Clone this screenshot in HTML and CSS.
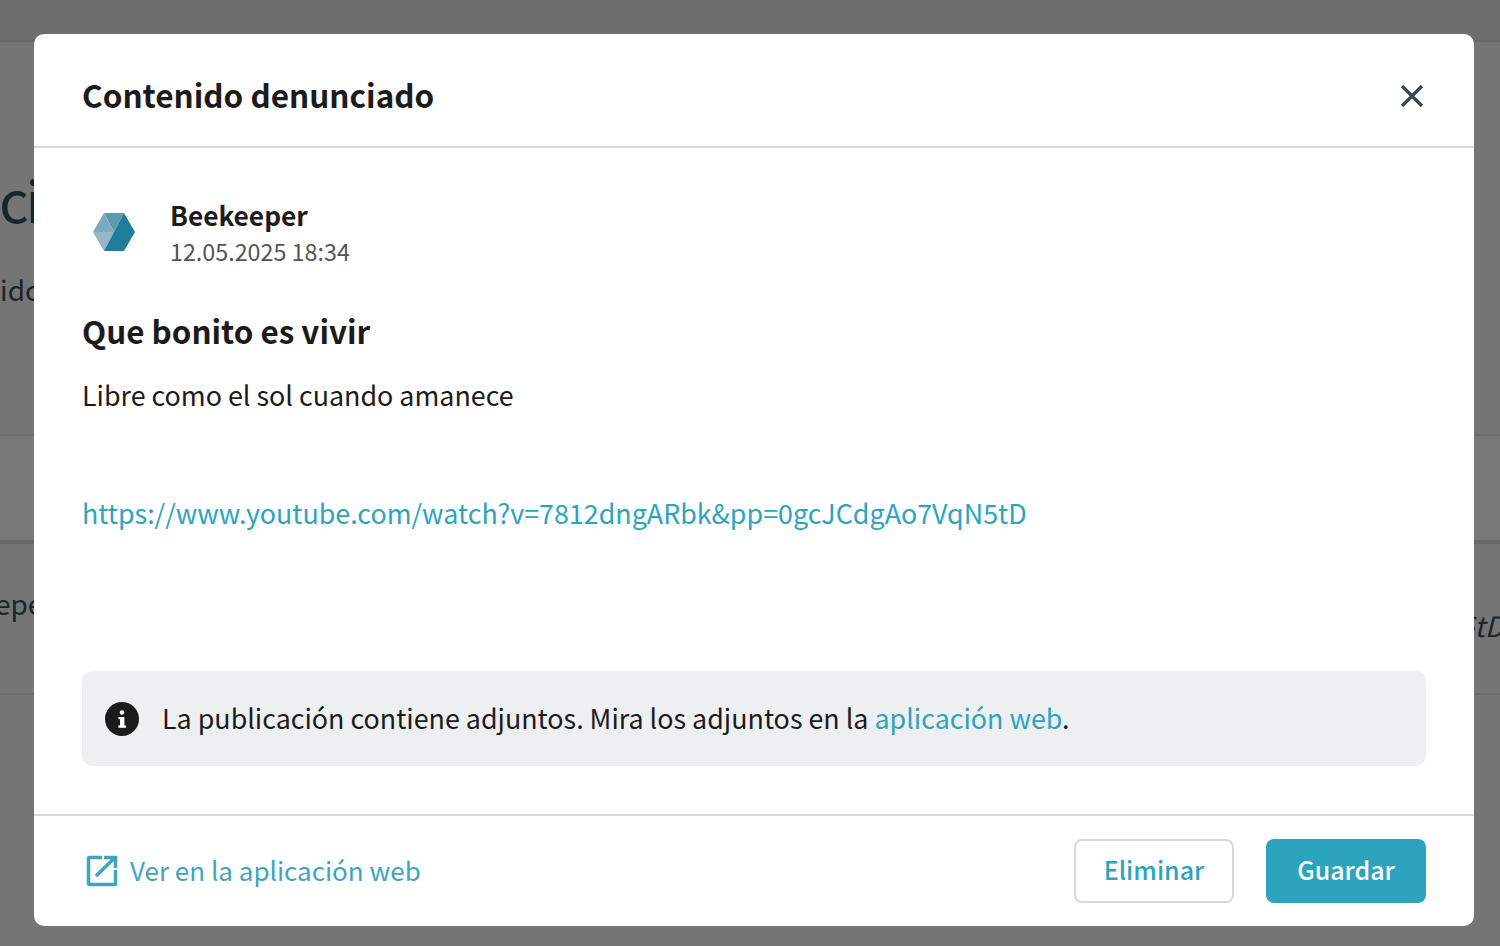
FILE: index.html
```html
<!DOCTYPE html>
<html lang="es">
<head>
<meta charset="utf-8">
<title>Contenido denunciado</title>
<link rel="stylesheet" href="styles.css">
</head>
<body>
<div class="page">
  <div class="top-bar"></div>
  <div class="bg-head">
    <div class="bg-title">ci</div>
    <div class="bg-sub">ido</div>
  </div>
  <div class="bg-tabs"></div>
  <div class="bg-row">
    <span class="bg-cell">epe</span>
    <em class="bg-cell-end">5tD</em>
  </div>
  <div class="bg-rest"></div>
</div>

<div class="modal" role="dialog">
  <header class="modal-header">
    <h1 class="modal-title">Contenido denunciado</h1>
    <svg class="close-icon" width="24" height="24" viewBox="0 0 24 24"><path d="M2 2 L22 22 M22 2 L2 22"/></svg>
  </header>
  <main class="modal-body">
    <div class="author">
      <div class="avatar">
        <svg width="44" height="40" viewBox="0 0 44 40">
          <polygon points="12,1 32,1 22,20" fill="#5f9ab0"/>
          <polygon points="1,20 12,1 22,20" fill="#7ba9bd"/>
          <polygon points="1,20 22,20 12,39" fill="#92b8c8"/>
          <polygon points="32,1 43,20 32,39 12,39" fill="#1f7d9b"/>
        </svg>
      </div>
      <div class="author-meta">
        <div class="author-name">Beekeeper</div>
        <div class="author-date">12.05.2025 18:34</div>
      </div>
    </div>
    <h2 class="post-title">Que bonito es vivir</h2>
    <p class="post-text">Libre como el sol cuando amanece</p>
    <a class="post-link" href="#">https://www.youtube.com/watch?v=7812dngARbk&amp;pp=0gcJCdgAo7VqN5tD</a>
    <div class="notice">
      <svg class="notice-icon" width="34" height="34" viewBox="0 0 34 34">
        <circle cx="17" cy="17" r="17" fill="#1b1b1b"/>
        <rect x="15" y="15" width="4.400" height="10" fill="#fff"/>
        <rect x="13.400" y="15" width="3" height="2.200" fill="#fff"/>
        <rect x="13.400" y="23.400" width="7.600" height="2.400" fill="#fff"/>
        <circle cx="17" cy="10.500" r="2.300" fill="#fff"/>
      </svg>
      <span class="notice-text">La publicación contiene adjuntos. Mira los adjuntos en la <a class="inline-link" href="#">aplicación web</a>.</span>
    </div>
  </main>
  <footer class="modal-footer">
    <a class="web-link" href="#">
      <svg width="32" height="32" viewBox="0 0 32 32" class="web-icon">
        <path d="M16 2.500 H3.500 a1 1 0 0 0 -1 1 V28.500 a1 1 0 0 0 1 1 H28.500 a1 1 0 0 0 1 -1 V15"/>
        <path d="M10 21 L28 3.500 M18 2.500 H29.500 V13"/>
      </svg>
      <span class="web-label">Ver en la aplicación web</span>
    </a>
    <div class="actions">
      <button class="btn btn-secondary">Eliminar</button>
      <button class="btn btn-primary">Guardar</button>
    </div>
  </footer>
</div>
</body>
</html>
```
FILE: styles.css
```css
* { box-sizing: border-box; }
html, body { margin: 0; height: 100%; }
body {
  overflow: hidden;
  background: #757575;
  font-family: "Noto Sans CJK SC", "Noto Sans", sans-serif;
  color: #1b1b1b;
}
.page { height: 946px; display: flex; flex-direction: column; }
.top-bar { height: 42px; background: #6e6e6e; border-bottom: 2px solid #686868; }
.bg-head { height: 394px; padding-top: 121px; color: #1a2529; border-bottom: 2px solid #6c6c6c; }
.bg-title { font-size: 58px; line-height: 70px; letter-spacing: -3px; margin-left: -1px; }
.bg-sub { font-size: 28px; line-height: 40px; margin-top: 36px; }
.bg-tabs { height: 108px; background: #787878; border-bottom: 4px solid #686868; }
.bg-row {
  height: 151px;
  display: flex;
  justify-content: space-between;
  padding-top: 41px;
  font-size: 28px;
  color: #1a2529;
  border-bottom: 2px solid #6c6c6c;
}
.bg-cell { line-height: 36px; margin-left: -5px; }
.bg-cell-end { line-height: 36px; margin-top: 22px; margin-right: -4px; }
.bg-rest { flex: 1; }

.modal {
  position: absolute;
  left: 34px;
  top: 34px;
  width: 1440px;
  height: 892px;
  background: #fff;
  border-radius: 10px;
  display: flex;
  flex-direction: column;
}
.modal-header {
  height: 114px;
  flex: none;
  padding: 11px 50px 0 48px;
  display: flex;
  align-items: center;
  justify-content: space-between;
  border-bottom: 2px solid #d8d8de;
}
.modal-title { margin: 0 0 4px; font-size: 31.500px; font-weight: 700; line-height: 48px; }
.close-icon { fill: none; stroke: #36474d; stroke-width: 3.2; }

.modal-body {
  flex: 1;
  padding: 48px 48px 48px;
  display: flex;
  flex-direction: column;
}
.author { display: flex; align-items: center; gap: 24px; height: 72px; }
.avatar { width: 64px; height: 64px; display: flex; align-items: center; justify-content: center; }
.author-meta { padding-top: 2px; }
.author-name { font-size: 26.300px; font-weight: 700; line-height: 36px; }
.author-date { font-size: 23.300px; line-height: 36px; color: #555; }
.post-title { margin: 39px 0 0; font-size: 31.400px; font-weight: 700; line-height: 48px; }
.post-text { margin: 16px 0 0; font-size: 26.850px; line-height: 48px; }
.post-link { margin-top: 70px; font-size: 26.850px; line-height: 48px; color: #2ca4bd; text-decoration: none; }
.notice {
  margin-top: auto;
  height: 95px;
  flex: none;
  background: #eeeff1;
  border-radius: 10px;
  padding: 0 24px 0 23px;
  display: flex;
  align-items: center;
  gap: 23px;
}
.notice-icon { flex: none; }
.notice-text { font-size: 26.850px; line-height: 40px; padding-bottom: 2px; }
.inline-link { color: #2ca4bd; text-decoration: none; }

.modal-footer {
  height: 112px;
  flex: none;
  padding: 0 48px;
  border-top: 2px solid #d8d8de;
  display: flex;
  align-items: center;
  justify-content: space-between;
}
.web-link {
  display: flex;
  align-items: center;
  gap: 12px;
  padding-left: 4px;
  font-size: 26px;
  color: #3ea5be;
  text-decoration: none;
}
.web-label { padding-bottom: 4px; }
.web-icon { flex: none; fill: none; stroke: #3ea5be; stroke-width: 3.500; }
.actions { display: flex; gap: 32px; }
.btn {
  width: 160px;
  height: 64px;
  border-radius: 8px;
  font-family: inherit;
  font-size: 25px;
  font-weight: 500;
  padding: 0 0 4px;
}
.btn-secondary { background: #fff; border: 2px solid #d8d8de; color: #2ca4bd; }
.btn-primary { background: #2ca4bd; border: 0; color: #fff; }
```
